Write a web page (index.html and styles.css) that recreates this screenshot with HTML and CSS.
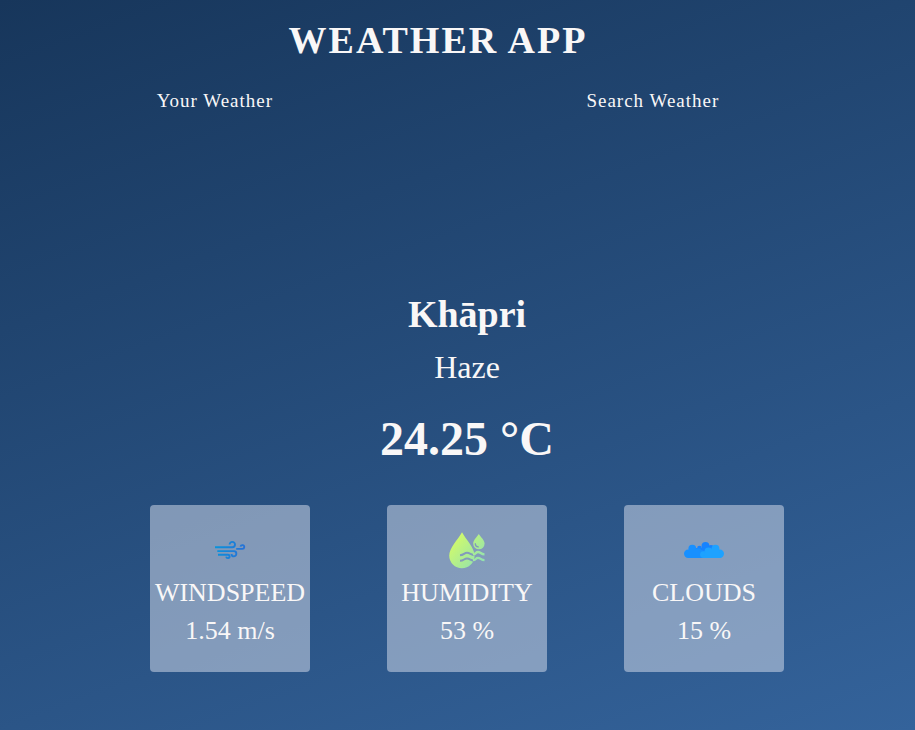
FILE: index.html
```html
<!DOCTYPE html>
<html lang="en">
<head>
<meta charset="utf-8">
<meta name="viewport" content="width=device-width, initial-scale=1">
<title>Weather App</title>
<link rel="stylesheet" href="styles.css">
</head>
<body>
<header class="header">
  <h1 class="title">WEATHER APP</h1>
  <nav class="tabs">
    <button class="tab" type="button">Your Weather</button>
    <button class="tab" type="button">Search Weather</button>
  </nav>
</header>
<main class="weather">
  <h2 class="city">Khāpri</h2>
  <p class="condition">Haze</p>
  <p class="temperature">24.25 °C</p>
  <div class="cards">
    <section class="card">
      <svg class="icon" viewBox="0 0 40 40" aria-hidden="true">
        <defs>
          <linearGradient id="wind" gradientUnits="userSpaceOnUse" x1="5" y1="15" x2="35" y2="24">
            <stop offset="0" stop-color="#0795dc"/>
            <stop offset="1" stop-color="#2a6fd6"/>
          </linearGradient>
        </defs>
        <g fill="none" stroke="url(#wind)" stroke-width="1.9">
          <path d="M5 17.300H22.300A2.700 2.700 0 1 0 19.600 14.600"/>
          <path d="M26.200 18.900H32.300A1.900 1.900 0 1 0 30.500 16.600"/>
          <path d="M7.300 21.100H24A2.300 2.300 0 0 1 26.300 23.400V24A2.400 2.400 0 0 1 21.500 24"/>
          <path d="M8 24.700H17.800A1.700 1.700 0 1 1 16.200 26.600"/>
        </g>
      </svg>
      <h3 class="label">WINDSPEED</h3>
      <p class="value">1.54 m/s</p>
    </section>
    <section class="card">
      <svg class="icon" viewBox="0 0 40 40" aria-hidden="true">
        <defs>
          <linearGradient id="drop" gradientUnits="userSpaceOnUse" x1="6" y1="8" x2="34" y2="32">
            <stop offset="0" stop-color="#d3fb68"/>
            <stop offset="1" stop-color="#93e3ae"/>
          </linearGradient>
          <mask id="cut" maskUnits="userSpaceOnUse" x="0" y="0" width="40" height="40">
            <path fill="#fff" d="M0 0H40V40H0Z"/>
            <path fill="#000" stroke="#000" stroke-width="2.400" d="M31.500 4C29 7.500 25.800 10.500 25.800 13.800A5.700 5.700 0 0 0 37.200 13.800C37.200 10.500 34 7.500 31.500 4Z"/>
            <g fill="none" stroke="#000" stroke-width="2">
              <path d="M13 25.200C17 25.200 17 22.800 20 22.800S24 25.200 27.500 25.200"/>
              <path d="M13 30.800C17 30.800 17 28.400 20 28.400S24 30.800 27.500 30.800"/>
            </g>
          </mask>
        </defs>
        <path fill="url(#drop)" mask="url(#cut)" d="M15 2.200C11 9.500 2.200 18 2.200 25.500A12.700 12.700 0 0 0 27.600 25.500C27.600 18 19 9.500 15 2.200Z"/>
        <path fill="url(#drop)" d="M31.800 4C29.500 7.500 26.200 10.300 26.200 13.600A5.700 5.700 0 0 0 37.600 13.600C37.600 10.300 34 7.500 31.800 4Z"/>
        <path fill="none" stroke="#829ab9" stroke-width="1.300" stroke-linecap="round" d="M28.300 13.700C28.300 15.500 29.500 16.800 31.300 16.900"/>
        <g fill="none" stroke="url(#drop)" stroke-width="2.300">
          <path d="M26 24.400C29 24.400 28.500 22 31 22S34 24.400 37.500 24.400"/>
          <path d="M26 30.200C29 30.200 28.500 27.800 31 27.800S34 30.200 37.500 30.200"/>
        </g>
      </svg>
      <h3 class="label">HUMIDITY</h3>
      <p class="value">53 %</p>
    </section>
    <section class="card">
      <svg class="icon" viewBox="0 0 40 40" aria-hidden="true">
        <g fill="#1683ff"><circle cx="21.500" cy="15.800" r="3.900"/><circle cx="15.500" cy="18.200" r="2.400"/><circle cx="27" cy="18" r="3"/><path d="M12 18H28V26H12Z"/></g>
        <g fill="#1890ff"><circle cx="4.200" cy="23.800" r="4.200"/><circle cx="8.300" cy="18.700" r="3.900"/><circle cx="14" cy="22" r="3.800"/><circle cx="17" cy="24" r="4"/><path d="M4 20H15L20 25V28H4Z"/></g>
        <g fill="#1ea2ff"><circle cx="19.500" cy="24.600" r="3.400"/><circle cx="24.500" cy="21.600" r="4"/><circle cx="31.500" cy="18.700" r="3.900"/><circle cx="35.800" cy="23.800" r="4.200"/><path d="M22 20H35L37 28H19Z"/></g>
      </svg>
      <h3 class="label">CLOUDS</h3>
      <p class="value">15 %</p>
    </section>
  </div>
</main>
</body>
</html>
```
FILE: styles.css
```css
* {
  box-sizing: border-box;
  margin: 0;
  padding: 0;
}

body {
  min-height: 100vh;
  background: linear-gradient(160deg, #17365b, #34639b);
  color: #f9f7f7;
  font-family: "Liberation Serif", serif;
}

.header {
  padding: 16px 39px 0 0;
  text-align: center;
}

.title {
  font-size: 38px;
  line-height: 48px;
  letter-spacing: 2px;
}

.tabs {
  display: flex;
  justify-content: space-around;
  padding-top: 24px;
}

.tab {
  border: 0;
  background: none;
  color: inherit;
  font: 19px/26px "Liberation Serif", serif;
  letter-spacing: 1px;
  cursor: pointer;
}

.weather {
  display: flex;
  flex-direction: column;
  align-items: center;
  padding: 176px 0 48px 19px;
}

.city {
  font-size: 38px;
  line-height: 48px;
}

.condition {
  padding-top: 9px;
  font-size: 32px;
  line-height: 40px;
}

.temperature {
  padding-top: 24px;
  font-size: 48px;
  font-weight: bold;
  line-height: 56px;
}

.cards {
  display: flex;
  flex-wrap: wrap;
  justify-content: center;
  gap: 32px 77px;
  padding-top: 38px;
}

.card {
  display: flex;
  flex-direction: column;
  align-items: center;
  min-width: 160px;
  padding: 25px 4px 26px;
  border-radius: 4px;
  background: rgba(219, 226, 239, 0.5);
}

.icon {
  width: 40px;
  height: 40px;
}

.label,
.value {
  padding-top: 8px;
  font-size: 26px;
  font-weight: normal;
  line-height: 30px;
}
```
